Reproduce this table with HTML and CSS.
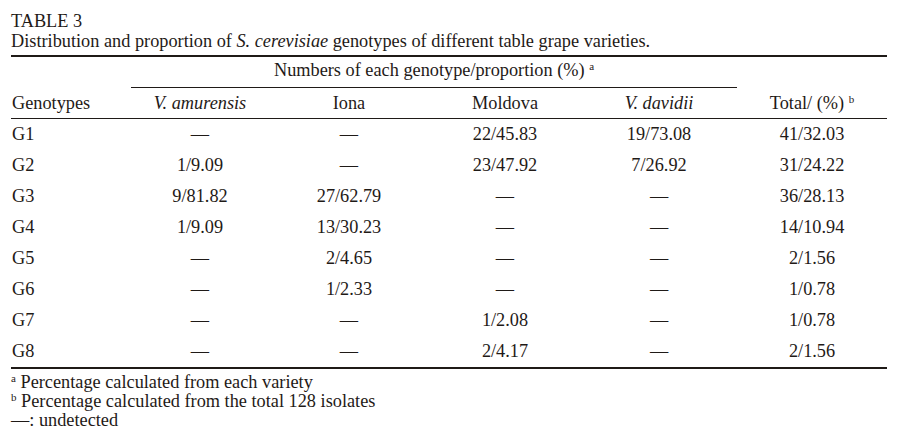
FILE: index.html
```html
<!DOCTYPE html>
<html>
<head>
<meta charset="utf-8">
<link rel="stylesheet" href="styles.css">
</head>
<body>
<div class="page">
  <div class="title">
    <div>TABLE 3</div>
    <div>Distribution and proportion of <i>S. cerevisiae</i> genotypes of different table grape varieties.</div>
  </div>
  <table class="data">
    <colgroup>
      <col class="c1"><col class="c2"><col class="c3"><col class="c4"><col class="c5"><col class="c6">
    </colgroup>
    <thead>
      <tr class="h1">
        <th></th>
        <th colspan="4" class="span">Numbers of each genotype/proportion (%) <sup>a</sup></th>
        <th></th>
      </tr>
      <tr class="h2">
        <th class="left">Genotypes</th>
        <th><i>V. amurensis</i></th>
        <th>Iona</th>
        <th>Moldova</th>
        <th><i>V. davidii</i></th>
        <th>Total/ (%) <sup>b</sup></th>
      </tr>
    </thead>
    <tbody>
      <tr><td class="left">G1</td><td>—</td><td>—</td><td>22/45.83</td><td>19/73.08</td><td>41/32.03</td></tr>
      <tr><td class="left">G2</td><td>1/9.09</td><td>—</td><td>23/47.92</td><td>7/26.92</td><td>31/24.22</td></tr>
      <tr><td class="left">G3</td><td>9/81.82</td><td>27/62.79</td><td>—</td><td>—</td><td>36/28.13</td></tr>
      <tr><td class="left">G4</td><td>1/9.09</td><td>13/30.23</td><td>—</td><td>—</td><td>14/10.94</td></tr>
      <tr><td class="left">G5</td><td>—</td><td>2/4.65</td><td>—</td><td>—</td><td>2/1.56</td></tr>
      <tr><td class="left">G6</td><td>—</td><td>1/2.33</td><td>—</td><td>—</td><td>1/0.78</td></tr>
      <tr><td class="left">G7</td><td>—</td><td>—</td><td>1/2.08</td><td>—</td><td>1/0.78</td></tr>
      <tr class="last"><td class="left">G8</td><td>—</td><td>—</td><td>2/4.17</td><td>—</td><td>2/1.56</td></tr>
    </tbody>
  </table>
  <div class="notes">
    <div><sup>a</sup> Percentage calculated from each variety</div>
    <div><sup>b</sup> Percentage calculated from the total 128 isolates</div>
    <div>—: undetected</div>
  </div>
</div>
</body>
</html>
```

FILE: styles.css
```css
html, body {
  margin: 0;
  padding: 0;
  background: #ffffff;
}

body {
  font-family: "Liberation Serif", "Times New Roman", serif;
  font-size: 18.3px;
  color: #1f1a17;
}

.page {
  width: 876px;
  padding: 11px 0 0 11px;
}

.title {
  line-height: 20px;
}

.data {
  margin-top: 4px;
  width: 876px;
  table-layout: fixed;
  border-collapse: separate;
  border-spacing: 0;
}

.c1 { width: 120px; }
.c2 { width: 138px; }
.c3 { width: 160px; }
.c4 { width: 152px; }
.c5 { width: 156px; }
.c6 { width: 150px; }

.data th,
.data td {
  font-weight: normal;
  text-align: center;
  line-height: 20px;
  padding: 0;
  vertical-align: top;
  white-space: nowrap;
}

.data .left {
  text-align: left;
  padding-left: 1px;
}

.h1 th {
  border-top: 2px solid #1f1a17;
  padding-top: 3px;
  padding-bottom: 7px;
}

.h1 th.span {
  border-bottom: 1px solid #1f1a17;
}

.h2 th {
  padding-top: 5px;
  padding-bottom: 5px;
  border-bottom: 1px solid #1f1a17;
}

.data td {
  padding-top: 5px;
  padding-bottom: 6px;
}

.data tr.last td {
  border-bottom: 2px solid #1f1a17;
}

sup {
  font-size: 11px;
  line-height: 0;
  vertical-align: 6px;
}

.notes {
  margin-top: 4px;
  line-height: 19px;
}
```
